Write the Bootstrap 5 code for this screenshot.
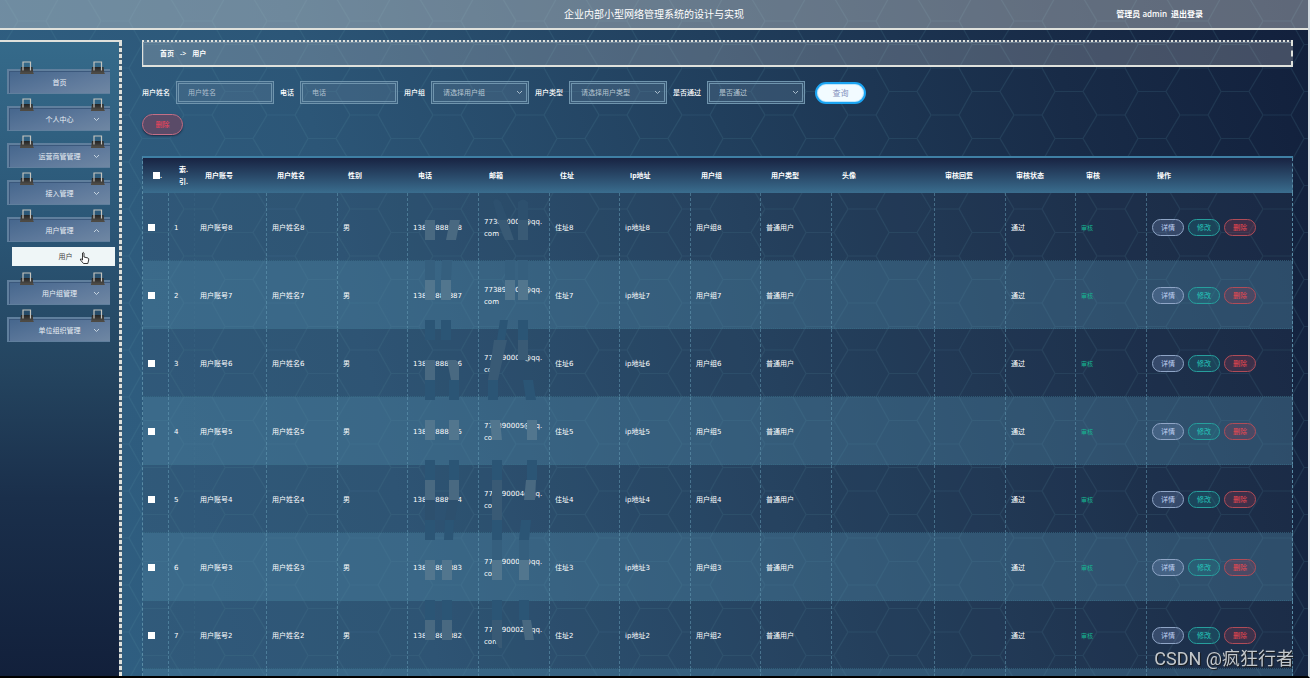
<!DOCTYPE html>
<html lang="zh-CN">
<head>
<meta charset="utf-8">
<meta name="viewport" content="width=device-width, initial-scale=1">
<title>企业内部小型网络管理系统的设计与实现</title>
<link href="https://cdn.jsdelivr.net/npm/bootstrap@5.3.0/dist/css/bootstrap.min.css" rel="stylesheet">
<style>
:root{--line:#dfe1dc}
body{font:7px/12px "Open Sans","Noto Sans CJK SC",sans-serif;color:#fff;background:#000}
.app{height:100vh;border-bottom:2px solid #000;border-right:2px solid #d5dde2;
 background:url("data:image/svg+xml,%3Csvg xmlns='http://www.w3.org/2000/svg' width='83' height='47'%3E%3Cpath d='M0 0H28L41 23.5H69L83 0M28 47L41 23.5M69 23.5L83 47M0 47H28' fill='none' stroke='%2350909c' stroke-opacity='.17' stroke-width='1.2'/%3E%3C/svg%3E") 18px 21px,linear-gradient(77deg,#306184 0%,#2c5677 30%,#213f5d 58%,#182b47 82%,#12203c 100%)}
.topbar{height:30px;border-bottom:2px solid var(--line);background:rgba(210,212,212,.4);display:grid;grid-template-columns:1fr auto 1fr}
.topbar h1{font-size:10px;line-height:14px;font-weight:400}
.topbar .who{font-size:8px;font-weight:600;padding-right:105px}
a{color:inherit;text-decoration:none}
.side{width:122px;margin-top:10px;padding:15px 12px 0 7px;border-top:2px solid var(--line);background:repeating-linear-gradient(var(--line) 0 4px,#4a5f70 4px 6px) right/3px 100% no-repeat,linear-gradient(#356a8a,#2b5777 28%,#24445f 52%,#1a2f4b 72%,#12203b)}
.entry{height:25px;margin-top:12px;width:103px;border:1px solid #607f9d;border-width:2px 0 1px 2px;color:#e8eef4;font-size:7px;padding:2px 0 0;background:linear-gradient(165deg,#45668d,#5f7a9c 60%,#6f87a3);box-shadow:inset 1px 1px 0 #3b587c;display:block}
.clip{width:14px;height:14px;position:absolute;top:-10px;left:11px}
.clip.r{left:82px}
.chev{position:absolute;right:10px;top:9px;width:7px;height:5px}
.sub{width:103px;margin:5px 0 14px 5px;height:19px;background:#eff6f7;color:#444;position:relative;padding-left:4px}
.cursor{position:absolute;left:67px;top:4px;width:11px;height:14px}
.main{padding:10px 15px 0 20px;min-width:0}
.crumb{height:27px;border:2px solid var(--line);border-top-style:dotted;border-right-style:dashed;border-left-width:1px;background:rgba(200,200,205,.27);padding-left:17px;font-weight:600;box-shadow:inset 1px 1px 0 rgba(150,170,185,.5)}
.crumb i{font-style:normal;margin:0 6px}
.filters{gap:6px;margin-top:14px}
.filters label{font-weight:500}
.box{width:98px;height:23px;border:3px double #6f94ad;background-color:rgba(100,130,155,.3);border-radius:0;color:#b8c6d2;font-size:7px;padding:0 9px;appearance:none;outline:0}
.box::placeholder{color:#aebfcd;opacity:1}
select.box{background-image:url("data:image/svg+xml,%3Csvg xmlns='http://www.w3.org/2000/svg' width='7' height='5'%3E%3Cpath d='M1 1l2.500 2.500L6 1' fill='none' stroke='%23a9bccb'/%3E%3C/svg%3E");background-repeat:no-repeat;background-position:right 3px center}
.pill{border:1px solid;border-radius:12px;padding:0;font-size:7px;line-height:12px}
.find{width:51px;height:22px;border:2px solid #1ba4f2;background:#f2fbff;color:#8290bd;font-size:8px;margin-left:4px;box-shadow:inset 0 0 0 1px #c0e6fb}
.drop{width:41px;height:21px;margin-top:10px;border-color:#c46f86;color:#fa4358;background:#5a4b68;box-shadow:0 1px 2px #1a2b43}
.holder{margin-top:21px;position:relative}
.users{width:100%;table-layout:fixed;border-collapse:separate;border-spacing:0;border-top:2px solid #3f7fa4;border-left:1px dashed #598ba5;font-family:"DejaVu Sans","Noto Sans CJK SC",sans-serif}
.users th{height:35px;padding:0 4px 0 10px;font-weight:700;vertical-align:middle;font-family:"Open Sans","Noto Sans CJK SC",sans-serif}
.users thead{background:linear-gradient(#182342,#3a6d8e)}
.users td{height:68px;padding:2px 4px 0 5px;vertical-align:middle;border-right:1px dashed rgba(105,160,185,.5);border-bottom:1px dotted rgba(55,110,135,.6)}
.users td:nth-child(2){border-right-color:rgba(80,130,155,.15)}
.users td:last-child,.users th:last-child{border-right:1px dashed #598ba5}
.users tbody tr{background:rgba(60,75,100,.17)}
.users tbody tr:nth-child(even){background:rgba(74,124,152,.47)}
.users tbody tr.next td{height:12px}
.tick{appearance:none;width:7px;height:7px;background:#fff;display:inline-block;vertical-align:middle;margin:0}
.tick:checked{background:#1ba4f2}
.act{width:32px;height:17px}
.a1{color:#bfd0f2;border-color:#8fa5c6;background:rgba(130,150,200,.25)}
.a2{color:#25c7bb;border-color:#279e9c;background:rgba(25,140,145,.25)}
.a3{color:#f0484f;border-color:#b04c58;background:rgba(160,60,80,.25)}
.ok{color:#16b892;font-size:6px}
.patches{position:absolute;left:283px;top:42px;width:120px;height:450px;pointer-events:none}
.sign{position:fixed;right:16px;bottom:8px;font:18px/22px Roboto,"Noto Sans CJK SC",sans-serif;color:#c3c8cc;text-shadow:1px 1px 1px #1b1b1b}
</style>
</head>
<body>
<svg width="0" height="0" class="position-absolute"><defs>
<linearGradient id="metal" x2="0" y2="1"><stop stop-color="#222"/><stop offset="1" stop-color="#56544f"/></linearGradient>
<symbol id="binder" viewBox="0 0 14 14"><path d="M1 6H12.500L13.500 13H0Z" fill="url(#metal)"/><path d="M3 9.500V1H10.500V9.500" fill="none" stroke="#c3c4be" stroke-width="1.200"/><path d="M0 12.500H13.500" stroke="#4e4a43"/></symbol>
<symbol id="down" viewBox="0 0 7 5"><path d="M1 1l2.500 2.500L6 1" fill="none" stroke="#cfdbe5" stroke-width=".9"/></symbol>
<symbol id="up" viewBox="0 0 7 5"><path d="M1 4l2.500-2.500L6 4" fill="none" stroke="#cfdbe5" stroke-width=".9"/></symbol>
</defs></svg>
<div class="app d-flex flex-column overflow-hidden">
 <header class="topbar align-items-center flex-shrink-0">
  <span></span><h1 class="m-0">企业内部小型网络管理系统的设计与实现</h1>
  <div class="who d-flex justify-content-end gap-1"><span>管理员 admin</span><a href="#">退出登录</a></div>
 </header>
 <div class="d-flex flex-grow-1 overflow-hidden">
  <nav class="side flex-shrink-0" id="menu"></nav>
  <main class="main flex-grow-1">
   <div class="crumb d-flex align-items-center"><a href="#">首页</a><i>-&gt;</i><span>用户</span></div>
   <form class="filters d-flex align-items-center" onsubmit="return false">
    <label for="fn">用户姓名</label><input class="box" id="fn" placeholder="用户姓名">
    <label for="ft">电话</label><input class="box" id="ft" placeholder="电话">
    <label for="fg">用户组</label><select class="box" id="fg"><option>请选择用户组</option></select>
    <label for="fk">用户类型</label><select class="box" id="fk"><option>请选择用户类型</option></select>
    <label for="fp">是否通过</label><select class="box" id="fp"><option>是否通过</option></select>
    <button class="pill find" type="submit">查询</button>
   </form>
   <button class="pill drop d-block" type="button">删除</button>
   <div class="holder">
    <table class="users">
     <colgroup id="cols"></colgroup>
     <thead><tr><th><input type="checkbox" class="tick" aria-label="全选">.</th><th>索.<br>引.</th><th>用户账号</th><th>用户姓名</th><th>性别</th><th>电话</th><th>邮箱</th><th>住址</th><th>ip地址</th><th>用户组</th><th>用户类型</th><th>头像</th><th>审核回复</th><th>审核状态</th><th>审核</th><th>操作</th></tr></thead>
     <tbody id="rows"></tbody>
    </table>
    <svg class="patches" viewBox="425 198 120 450" aria-hidden="true">
     <g fill="#496981"><path d="M425 220h10v20h-10zM450 220h10l-4 20h-10zM425 360h10v20h-10zM447 360h9l3 5v15h-8zM425 480h10v20h-10zM449 480h10v20h-10zM526 480h10l-1 20h-11zM425 620h10v20h-10zM442 620h10v20h-10zM522 620h9l3 20h-9z"/></g>
     <g fill="#395a75"><path d="M497 220h10l7 20h-9zM518 220h10v20h-10zM501 340h6l-9 40h-10l6-40zM518 340h10v20h-10zM492 480h10v40h-10zM492 620h10v34l-7-14h-3z"/></g>
     <g fill="#2d506e"><path d="M493 202q2-6 8 0l7 18h-10zM518 202q5-5 10 0v18h-10zM425 500h10v20h-10zM448 500h10l-3 20h-10z"/></g>
     <g fill="#355f7e"><path d="M425 260h10v20h-10zM442 260h10l-1 20h-10zM505 260h10v20h-10zM518 260h10v20h-10zM492 540h10v20h-10zM519 540h10v20h-10z"/></g>
     <g fill="#52768e"><path d="M425 280h10v20h-10zM441 280h10v20h-10zM505 280h10v20h-10zM518 280h10v20h-10zM425 420h10v20h-10zM449 420h10v20h-10zM490 420h10l2 20h-10zM527 420h10v20h-10zM425 560h10v20h-10zM442 560h10v20h-10zM492 560h10v20h-10zM519 560h10v20h-10z"/></g>
     <g fill="#2b5575"><path d="M425 320h10v20h-10zM441 320h10v20h-10zM500 320h8l-3 20h-8zM518 320h10v20h-10zM425 380h10v20h-10zM449 380h10v20h-10zM488 380h10v20h-10zM523 380h10l3 20h-10zM425 460h10v20h-10zM449 460h10v20h-10zM492 460h10v20h-10zM527 460h10v20h-10zM425 520h10v20h-10zM445 520h9l-1 20h-9zM492 520h10v20h-10zM521 520h10l-2 20h-10zM425 600h10v20h-10zM442 600h10v20h-10zM492 600h10v20h-10zM519 600h10v20h-10z"/></g>
    </svg>
   </div>
  </main>
 </div>
</div>
<div class="sign">CSDN @疯狂行者</div>
<script>
const menu=[['首页',''],['个人中心','down'],['运营商管管理','down'],['接入管理','down'],['用户管理','up'],['用户组管理','down'],['单位组织管理','down']];
document.getElementById('menu').innerHTML=menu.map(([t,c])=>`<button type="button" class="entry position-relative">${t}<svg class="clip"><use href="#binder"/></svg><svg class="clip r"><use href="#binder"/></svg>${c?`<svg class="chev"><use href="#${c}"/></svg>`:''}</button>`+(c==='up'?`<a href="#" class="sub d-flex align-items-center justify-content-center">用户<svg class="cursor" viewBox="0 0 11 14"><path d="M3.500 8V2Q4.300.8 5 2V6L9 7Q10 7.300 9.700 9L8.800 12.500H4.500L1.500 9Q1 7.500 2.300 8L3.500 9Z" fill="#fff" stroke="#222" stroke-width=".9"/></svg></a>`:'')).join('');
document.getElementById('cols').innerHTML=[26,26,72,71,70,71,71,70,71,70,71,103,71,70,71].map(w=>`<col width="${w}">`).join('')+'<col>';
let out='';
for(let i=1;i<8;i++){const n=9-i;
 const cells=[`<input type="checkbox" class="tick" aria-label="选择${i}">`,i,'用户账号'+n,'用户姓名'+n,'男','1388888888'+n,`77389000${n}@qq.<wbr>com`,'住址'+n,'ip地址'+n,'用户组'+n,'普通用户','','','通过','<a href="#" class="ok">审核</a>','<div class="acts d-flex"><button class="pill act a1">详情</button><button class="pill act a2 mx-1">修改</button><button class="pill act a3">删除</button></div>'];
 out+='<tr>'+cells.map(c=>`<td>${c}</td>`).join('')+'</tr>';}
out+='<tr class="next">'+'<td></td>'.repeat(16)+'</tr>';
document.getElementById('rows').innerHTML=out;
</script>
<script src="https://cdn.jsdelivr.net/npm/bootstrap@5.3.0/dist/js/bootstrap.bundle.min.js"></script>
</body>
</html>
